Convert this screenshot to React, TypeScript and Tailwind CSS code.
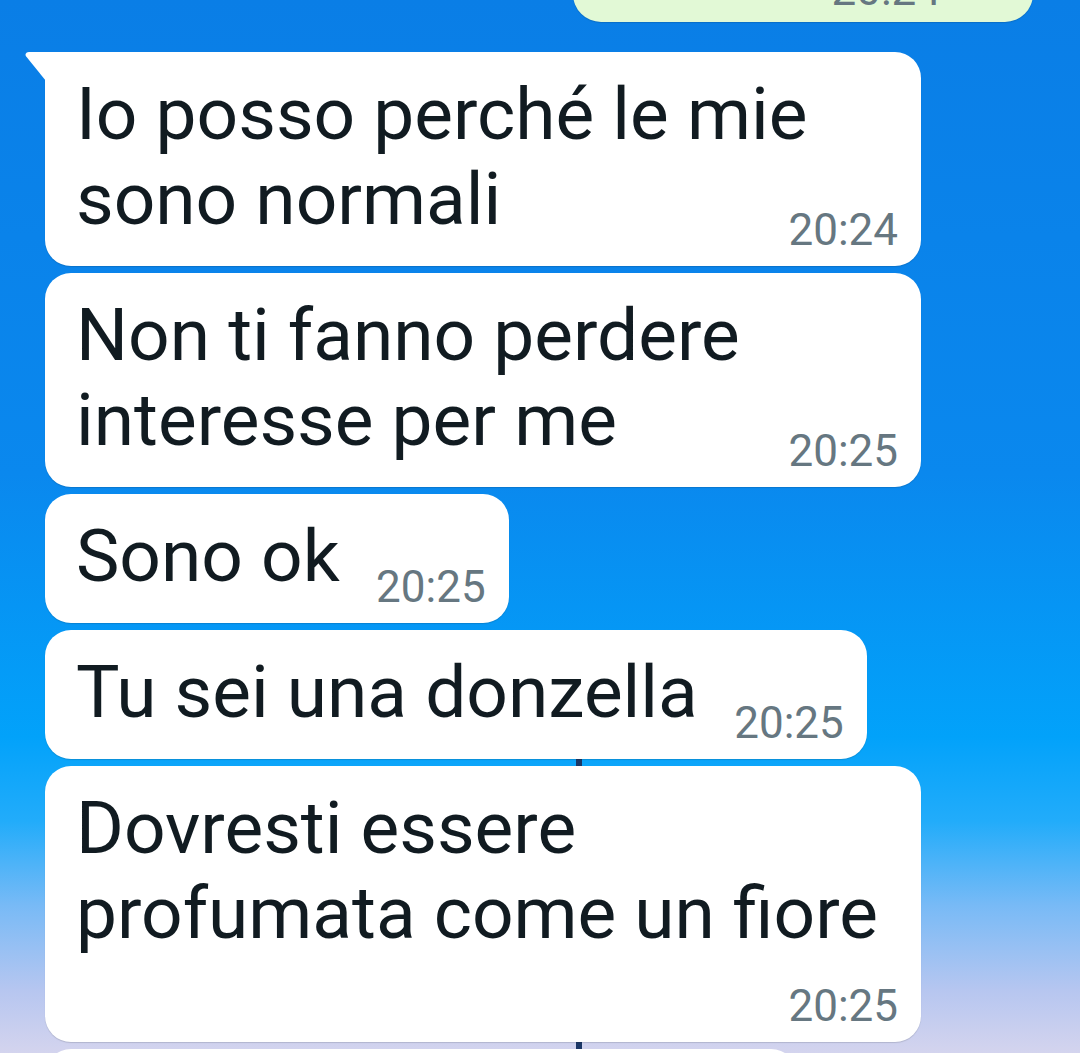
import clsx from "clsx";
import type { ReactNode } from "react";

type Message = {
  text: ReactNode;
  time: string;
  wide?: boolean;
  below?: boolean;
  tail?: boolean;
};

const messages: Message[] = [
  {
    text: (
      <>
        Io posso perché le mie
        <br />
        sono normali
      </>
    ),
    time: "20:24",
    wide: true,
    tail: true,
  },
  {
    text: (
      <>
        Non ti fanno perdere
        <br />
        interesse per me
      </>
    ),
    time: "20:25",
    wide: true,
  },
  { text: "Sono ok", time: "20:25" },
  { text: "Tu sei una donzella", time: "20:25" },
  {
    text: (
      <>
        Dovresti essere
        <br />
        profumata come un fiore
      </>
    ),
    time: "20:25",
    wide: true,
    below: true,
  },
];

function Bubble({ m }: { m: Message }) {
  return (
    <div
      className={clsx(
        "relative rounded-[26px] bg-white pl-[31px] pr-[23px] pt-[20px] pb-[10px] shadow-[0_1px_1px_rgba(11,20,26,0.15)]",
        m.wide ? "w-[876px]" : "w-fit",
        m.tail && "rounded-tl-none"
      )}
    >
      {m.tail && (
        <svg
          className="absolute -left-[20px] top-0"
          width="21"
          height="29"
          viewBox="0 0 21 29"
        >
          <path d="M4 0H21V29L1.2 4.6C-0.4 2.4 1 0 4 0Z" fill="#ffffff" />
        </svg>
      )}
      <div className="text-[73px] leading-[85px] text-[#111b21]">
        {m.text}
        {!m.below && <span className="inline-block w-[146px]" />}
      </div>
      <div
        className={clsx(
          "flex justify-end text-[44px] leading-[52px] text-[#667781]",
          m.below ? "mt-[24px]" : "-mt-[38px]"
        )}
      >
        {m.time}
      </div>
    </div>
  );
}

export default function App() {
  return (
    <div className="relative h-[1053px] w-[1080px] overflow-hidden bg-[linear-gradient(180deg,#0a7ee6_0%,#0a88ee_45%,#02a2fa_70%,#22acfa_78%,#78baf6_86%,#b6c6f0_94%,#d4d4ee_100%)] font-['Roboto',sans-serif]">
      {/* wallpaper detail showing between bubbles */}
      <div className="absolute left-[576px] top-[745px] h-[310px] w-[6px] bg-[#1b3766]" />

      <div className="relative flex flex-col">
        {/* outgoing bubble cut off at the top */}
        <div className="flex justify-end pr-[47px]">
          <div className="-mt-[178px] flex h-[200px] w-[460px] flex-col justify-end rounded-[28px] bg-[#e2f9d6] pb-[6px] pr-[92px] shadow-[0_1px_1px_rgba(11,20,26,0.15)]">
            <div className="flex justify-end text-[44px] leading-[52px] text-[#667781]">
              20:24
            </div>
          </div>
        </div>

        <div className="mt-[30px] flex flex-col gap-[7px] pl-[45px]">
          {messages.map((m, i) => (
            <Bubble key={i} m={m} />
          ))}
          <div className="h-[120px] w-[752px] rounded-[26px] bg-white shadow-[0_1px_1px_rgba(11,20,26,0.15)]" />
        </div>
      </div>
    </div>
  );
}
